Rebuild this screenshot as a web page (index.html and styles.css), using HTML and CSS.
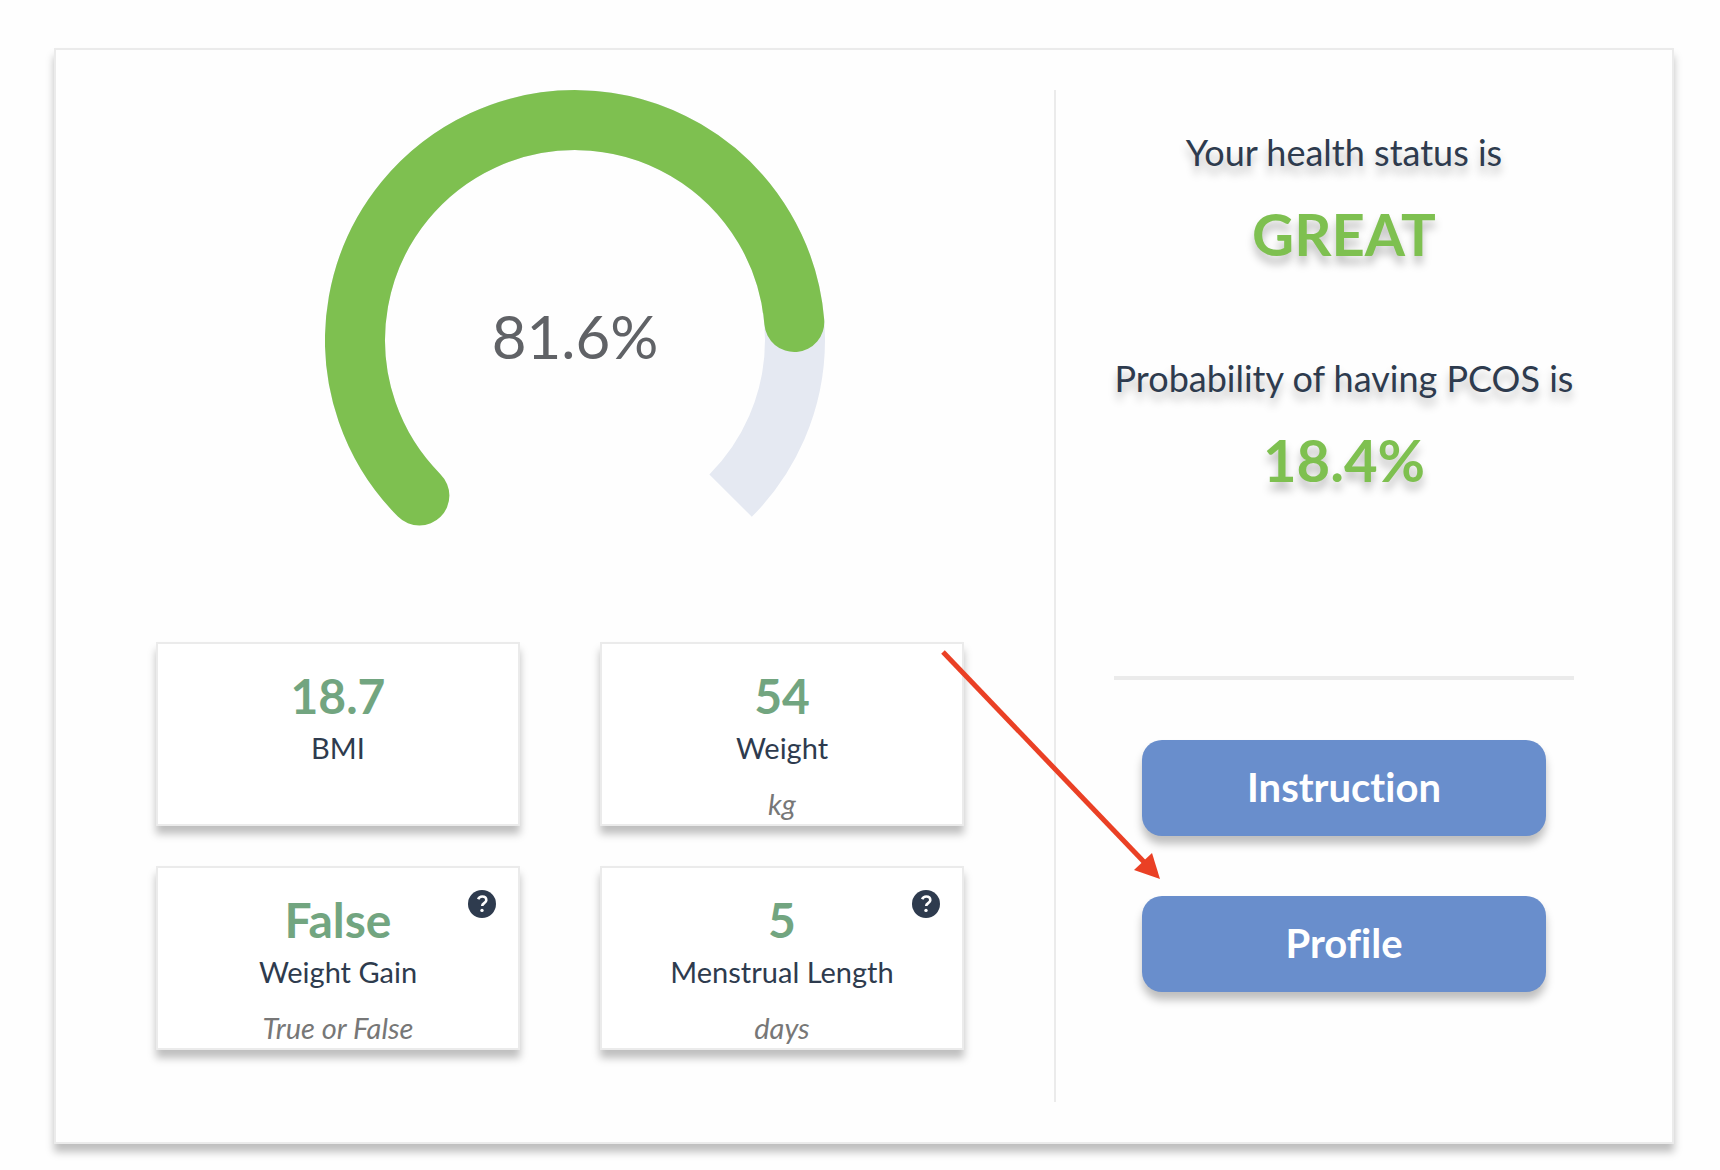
FILE: index.html
```html
<!DOCTYPE html>
<html lang="en">
<head>
<meta charset="utf-8">
<meta name="viewport" content="width=device-width, initial-scale=1">
<title>Health status</title>
<link rel="stylesheet" href="styles.css">
</head>
<body>
<main class="report">
  <section class="overview">
    <div class="gauge">
      <svg class="gauge-ring" viewBox="0 0 500 500" aria-hidden="true">
        <path class="ring-track" d="M94.4 405.6A220 220 0 1 1 405.6 405.6"/>
        <path class="ring-value" d="M94.4 405.6A220 220 0 1 1 469.3 232"/>
      </svg>
      <span class="gauge-label">81.6%</span>
    </div>
    <div class="stats">
      <article class="stat">
        <strong class="stat-value">18.7</strong>
        <span class="stat-name">BMI</span>
      </article>
      <article class="stat">
        <strong class="stat-value">54</strong>
        <span class="stat-name">Weight</span>
        <em class="stat-unit">kg</em>
      </article>
      <article class="stat">
        <strong class="stat-value">False</strong>
        <span class="stat-name">Weight Gain</span>
        <em class="stat-unit">True or False</em>
        <button class="help" type="button" aria-label="About weight gain">
          <svg viewBox="0 0 28 28" aria-hidden="true"><path d="M10.2 9.3C10.9 7.4 12.3 6.5 14.2 6.5C16.6 6.5 18.3 8 18.3 10.2C18.3 13 14.2 13.3 14.2 15.9"/><circle cx="14" cy="20.4" r="1.7"/></svg>
        </button>
      </article>
      <article class="stat">
        <strong class="stat-value">5</strong>
        <span class="stat-name">Menstrual Length</span>
        <em class="stat-unit">days</em>
        <button class="help" type="button" aria-label="About menstrual length">
          <svg viewBox="0 0 28 28" aria-hidden="true"><path d="M10.2 9.3C10.9 7.4 12.3 6.5 14.2 6.5C16.6 6.5 18.3 8 18.3 10.2C18.3 13 14.2 13.3 14.2 15.9"/><circle cx="14" cy="20.4" r="1.7"/></svg>
        </button>
      </article>
    </div>
  </section>
  <aside class="summary">
    <div class="results">
      <div class="result">
        <p class="result-title">Your health status is</p>
        <strong class="result-value">GREAT</strong>
      </div>
      <div class="result">
        <p class="result-title">Probability of having PCOS is</p>
        <strong class="result-value">18.4%</strong>
      </div>
    </div>
    <hr class="rule">
    <div class="actions">
      <button class="action" type="button">Instruction</button>
      <button class="action" type="button">Profile</button>
    </div>
    <svg class="arrow" viewBox="0 0 220 232" aria-hidden="true">
      <path class="arrow-shaft" d="M3 3L205 214"/>
      <path class="arrow-head" d="M220 230L194 221L212 204Z"/>
    </svg>
  </aside>
</main>
</body>
</html>
```
FILE: styles.css
```css
* {
  box-sizing: border-box;
}

body {
  margin: 0;
  padding: 48px 46px 26px 54px;
  background: #fefefe;
  color: #2e3b4e;
  font-family: Lato, "Open Sans", sans-serif;
  font-variant-ligatures: none;
}

p {
  margin: 0;
}

button {
  padding: 0;
  border: 0;
  font-family: inherit;
  font-variant-ligatures: inherit;
  cursor: pointer;
}

.report {
  display: grid;
  grid-template-columns: 5fr 3fr;
  padding: 40px;
  border: 2px solid #ebebeb;
  background: #fefefe;
  box-shadow: 0 8px 8px rgba(0, 0, 0, 0.25);
}

.overview {
  display: flex;
  flex-direction: column;
  gap: 52px;
  padding-bottom: 52px;
  border-right: 2px solid #ebebeb;
}

.gauge {
  display: grid;
  place-items: center;
}

.gauge > * {
  grid-area: 1 / 1;
}

.gauge-ring {
  width: 500px;
}

.ring-track,
.ring-value {
  fill: none;
  stroke-width: 60;
}

.ring-track {
  stroke: #e5e9f2;
}

.ring-value {
  stroke: #7ec050;
  stroke-linecap: round;
}

.gauge-label {
  padding-bottom: 8px;
  color: #606266;
  font-size: 60px;
  line-height: 72px;
}

.stats {
  display: grid;
  grid-template-columns: repeat(2, minmax(0, 364px));
  gap: 40px 80px;
  padding-left: 60px;
}

.stat {
  position: relative;
  display: flex;
  flex-direction: column;
  align-items: center;
  min-height: 184px;
  padding-top: 24px;
  border: 2px solid #ebebeb;
  background: #fff;
  box-shadow: 0 8px 8px rgba(0, 0, 0, 0.25);
}

.stat-value {
  color: #72a580;
  font-size: 48px;
  font-weight: 700;
  line-height: 56px;
}

.stat-name {
  margin-top: 4px;
  font-size: 29px;
  line-height: 40px;
}

.stat-unit {
  margin-top: 20px;
  color: #777;
  font-size: 29px;
  line-height: 32px;
}

.help {
  position: absolute;
  top: 22px;
  right: 22px;
  width: 28px;
  height: 28px;
  border-radius: 50%;
  background: #2e3b4e;
}

.help svg {
  display: block;
}

.help path {
  fill: none;
  stroke: #fff;
  stroke-width: 2.6;
}

.help circle {
  fill: #fff;
}

.summary {
  position: relative;
  display: flex;
  flex-direction: column;
  align-items: center;
  gap: 60px;
  padding-top: 38px;
}

.results {
  display: flex;
  flex-direction: column;
  gap: 84px;
  min-height: 488px;
}

.result {
  display: flex;
  flex-direction: column;
  align-items: center;
  gap: 22px;
  text-shadow: 0 8px 8px rgba(0, 0, 0, 0.25);
}

.result-title {
  font-size: 36px;
  line-height: 48px;
}

.result-value {
  color: #7ec050;
  font-size: 58px;
  font-weight: 700;
  line-height: 72px;
}

.rule {
  width: 80%;
  height: 4px;
  margin: 0;
  border: 0;
  background: #ebebeb;
}

.actions {
  display: flex;
  flex-direction: column;
  gap: 60px;
  width: 70%;
}

.action {
  height: 96px;
  padding-bottom: 2px;
  border-radius: 20px;
  background: #698ecc;
  color: #fff;
  font-size: 40px;
  font-weight: 700;
  box-shadow: 0 8px 8px rgba(0, 0, 0, 0.25);
}

.arrow {
  position: absolute;
  top: 559px;
  left: -116px;
  width: 220px;
}

.arrow-shaft {
  stroke: #ea4025;
  stroke-width: 5;
}

.arrow-head {
  fill: #ea4025;
}
```
